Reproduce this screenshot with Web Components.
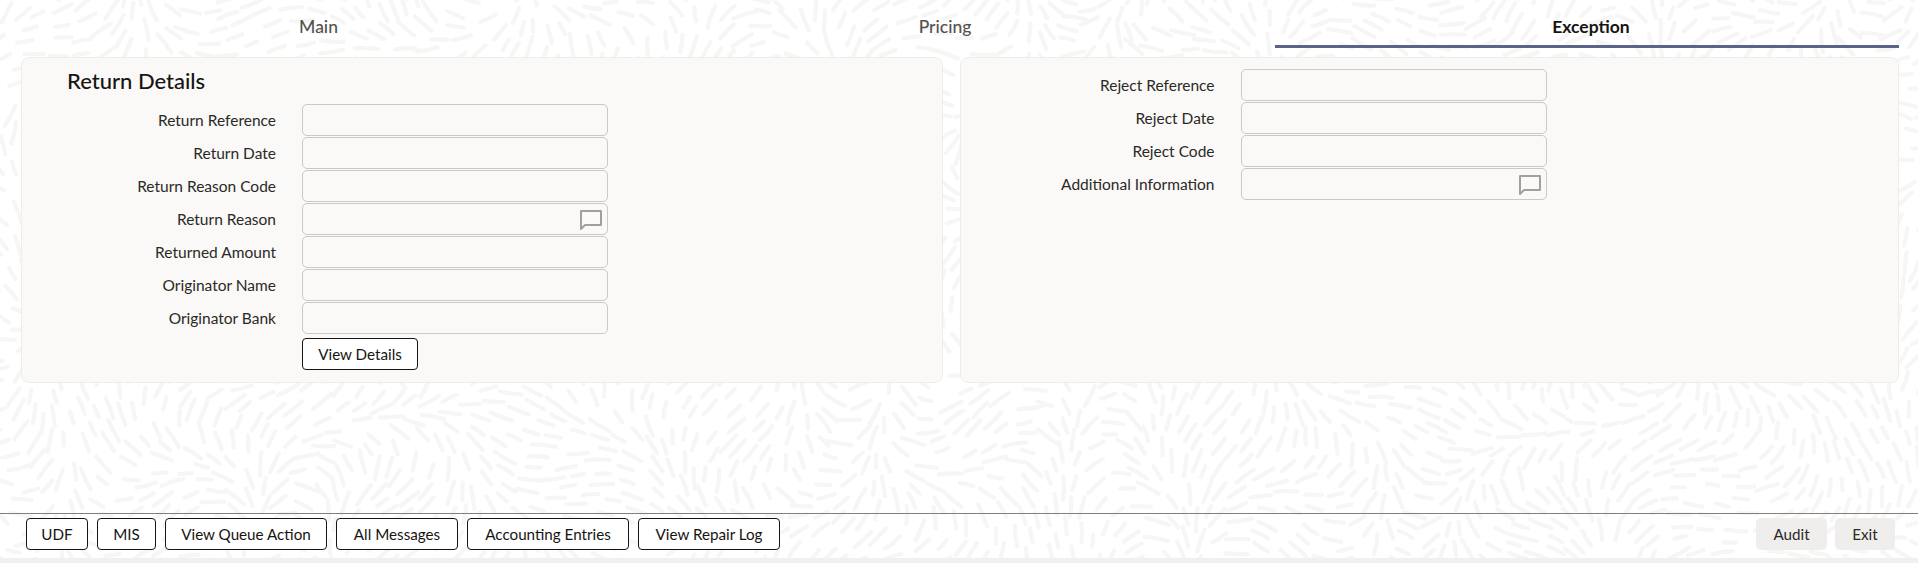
<!DOCTYPE html>
<html><head><meta charset="utf-8"><title>Exception</title>
<style>html,body{margin:0;padding:0;height:100%;background:#fff;overflow:hidden}body{font-family:Lato,"Noto Sans",sans-serif}</style></head>
<body>
<x-app>
  <x-tabs slot="tabs">
    <x-tab style="--w:637px">Main</x-tab>
    <x-tab style="--w:616px">Pricing</x-tab>
    <x-tab active style="--w:624px;--ml:22px;--pl:8px">Exception</x-tab>
  </x-tabs>
  <x-panel slot="left" heading="Return Details">
    <x-field label="Return Reference"></x-field>
    <x-field label="Return Date"></x-field>
    <x-field label="Return Reason Code"></x-field>
    <x-field label="Return Reason" comment></x-field>
    <x-field label="Returned Amount"></x-field>
    <x-field label="Originator Name"></x-field>
    <x-field label="Originator Bank"></x-field>
    <x-btn style="margin:3px 0 0 280px;width:116px">View Details</x-btn>
  </x-panel>
  <x-panel slot="right">
    <x-field label="Reject Reference"></x-field>
    <x-field label="Reject Date"></x-field>
    <x-field label="Reject Code"></x-field>
    <x-field label="Additional Information" comment></x-field>
  </x-panel>
  <x-btn slot="actions" style="width:62px">UDF</x-btn>
  <x-btn slot="actions" style="width:59px">MIS</x-btn>
  <x-btn slot="actions" style="width:162px">View Queue Action</x-btn>
  <x-btn slot="actions" style="width:122px">All Messages</x-btn>
  <x-btn slot="actions" style="width:162px">Accounting Entries</x-btn>
  <x-btn slot="actions" style="width:142px">View Repair Log</x-btn>
  <x-btn slot="end" ghost style="width:71px">Audit</x-btn>
  <x-btn slot="end" ghost style="width:60px">Exit</x-btn>
</x-app>
<script>
function def(name, css, html, init){
  customElements.define(name, class extends HTMLElement{
    constructor(){super();const r=this.attachShadow({mode:'open'});r.innerHTML='<style>'+css+'</style>'+(typeof html==='function'?html(this):html);}
    connectedCallback(){ if(init) init(this); }
  });
}
def('x-pattern',':host{position:absolute;inset:0;display:block;overflow:hidden;z-index:0}svg{display:block}','<svg id="s" width="1918" height="563" viewBox="0 0 1918 563" fill="none" stroke="#f6f6f5" stroke-width="4.2" stroke-linecap="round"></svg>',el=>{
  const s=el.shadowRoot.getElementById('s');let seed=12345;const R=()=>(seed=(seed*16807)%2147483647)/2147483647;
  const cell=24,grid=new Map();let d='';
  for(let i=0;i<42000;i++){
    const px=R()*1950-16,py=R()*600-18;
    const a=1.9*Math.sin(px/120+py/150)+1.5*Math.cos(px/71-py/97)+0.6*Math.sin(py/37+px/53);
    const ux=Math.cos(a),uy=Math.sin(a);
    const cx=Math.floor(px/cell),cy=Math.floor(py/cell);let ok=true;
    for(let gx=cx-1;gx<=cx+1&&ok;gx++)for(let gy=cy-1;gy<=cy+1&&ok;gy++){
      for(const q of grid.get(gx+','+gy)||[]){
        const dx=q[0]-px,dy=q[1]-py,al=(dx*ux+dy*uy)/22,pe=(dx*uy-dy*ux)/10;
        if(al*al+pe*pe<1){ok=false;break;}
      }
    }
    if(!ok)continue;
    const k=cx+','+cy;if(!grid.has(k))grid.set(k,[]);grid.get(k).push([px,py]);
    const l=6+R()*6,b=(R()-.5)*.3,dx=ux*l,dy=uy*l;
    d+=`M${(px-dx).toFixed(1)} ${(py-dy).toFixed(1)}Q${(px+b*dy).toFixed(1)} ${(py-b*dx).toFixed(1)} ${(px+dx).toFixed(1)} ${(py+dy).toFixed(1)}`;
  }
  s.innerHTML='<path d="'+d+'"/>';
});
def('x-app',`:host{position:relative;display:flex;flex-direction:column;height:563px;width:1918px;color:#161513;overflow:hidden}
.tabs,.panels,.foot,.strip{position:relative;z-index:1}
.panels{display:grid;grid-template-columns:922px 939px;column-gap:16.5px;padding:9px 0 0 21px}
.spacer{flex:1}
.foot{display:flex;justify-content:space-between;align-items:flex-start;border-top:1px solid #7f7f7f;padding:4px 23px 0 26px;box-sizing:border-box;height:45px}
.a{display:flex;gap:9px}.e{display:flex;gap:8px}
.strip{height:5px;background:#f0f0f0}`,
`<x-pattern></x-pattern><div class="tabs"><slot name="tabs"></slot></div>
<div class="panels"><slot name="left"></slot><slot name="right"></slot></div><div class="spacer"></div>
<div class="foot"><div class="a"><slot name="actions"></slot></div><div class="e"><slot name="end"></slot></div></div><div class="strip"></div>`);
def('x-tabs',':host{display:flex;height:48px}','<slot></slot>');
def('x-tab',`:host{display:block;box-sizing:border-box;width:var(--w);margin-left:var(--ml,0);padding:0 0 3px var(--pl,0);height:48px;line-height:53px;text-align:center;font-size:17.5px;font-weight:500;color:#55524e}
:host([active]){border-bottom:3px solid #5a6487;padding-bottom:0;font-weight:700;color:#161513}`,'<slot></slot>');
def('x-panel',`:host{display:block;box-sizing:border-box;height:326px;background:#faf9f7;border:1px solid #eeedea;border-radius:8px;padding:11px 0 0 0}
h2{margin:0 0 11px 45px;font-size:22px;font-weight:500;line-height:24px;color:#161513}h2:empty{display:none}
.rows{display:flex;flex-direction:column;gap:1px}`,
el=>`<h2>${el.getAttribute('heading')||''}</h2><div class="rows"><slot></slot></div>`);
def('x-field',`:host{display:grid;grid-template-columns:254px 306px;column-gap:26px;align-items:center}
label{text-align:right;font-size:15.5px;color:#2b2926}
.b{box-sizing:border-box;height:32px;background:#fbf9f8;border:1px solid #cbc9c5;border-radius:5px;display:flex;justify-content:flex-end;align-items:center;padding-right:5px}
svg{display:block}`,
el=>`<label>${el.getAttribute('label')}</label><div class="b">${el.hasAttribute('comment')?'<svg width="23" height="21" viewBox="0 0 23 21" fill="none" stroke="#a3a09c" stroke-width="2"><path d="M2 2H22V16H6L2 20Z" stroke-linejoin="round"/></svg>':''}</div>`);
def('x-btn',`:host{display:inline-flex;align-items:center;justify-content:center;box-sizing:border-box;height:32px;background:#fff;border:1px solid #161513;border-radius:4px;font-size:15.2px;color:#161513;white-space:nowrap}
:host([ghost]){background:#efeeec;border-color:transparent;border-radius:5px;color:#2b2926}`,'<slot></slot>');
</script>
</body></html>
